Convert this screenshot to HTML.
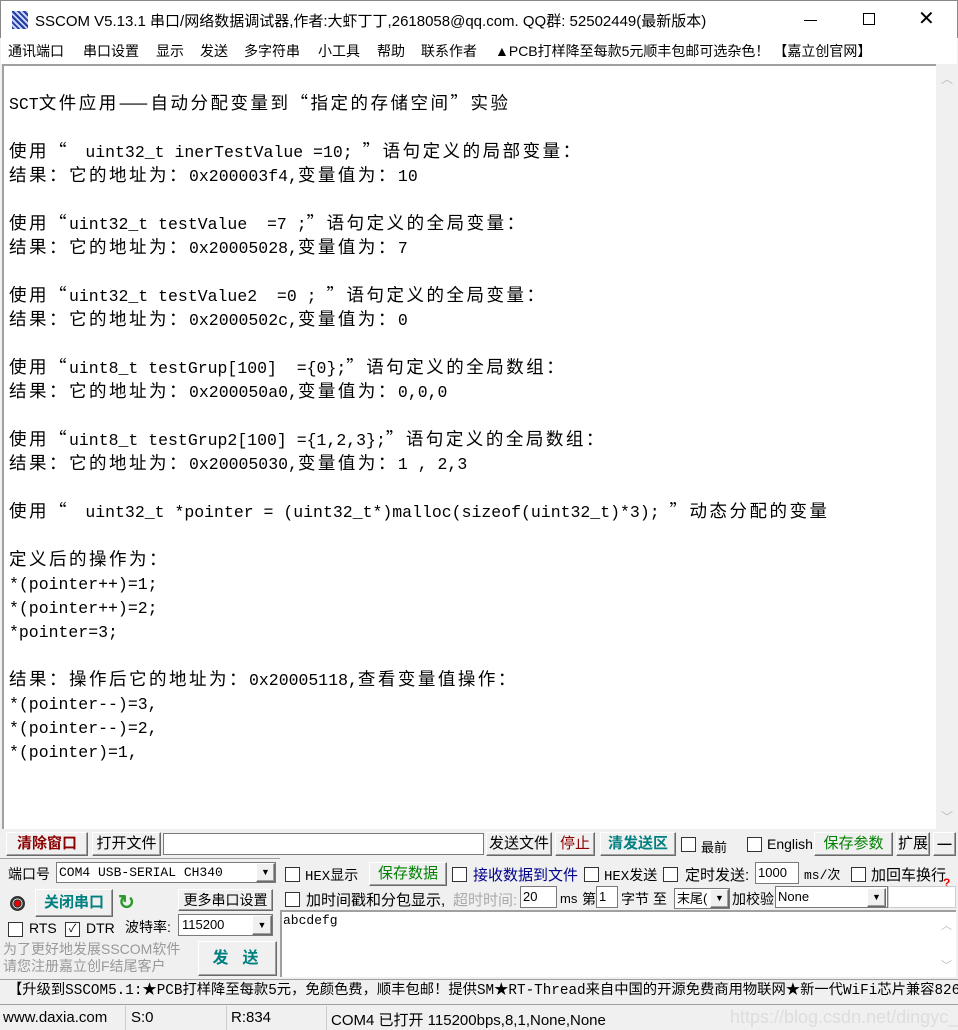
<!DOCTYPE html>
<html><head><meta charset="utf-8"><style>
*{margin:0;padding:0;box-sizing:border-box}
body{width:958px;height:1030px;position:relative;background:#f0f0f0;font-family:"Liberation Sans","Noto Sans CJK SC",sans-serif;font-size:14px;color:#000;overflow:hidden}
.a{position:absolute;white-space:nowrap}
#title{left:0;top:0;width:958px;height:38px;background:#fff;border:1px solid #888;border-bottom:none}
#menu{left:1px;top:38px;width:956px;height:26px;background:#fff;font-size:14px}
#txt{left:2px;top:64px;width:934px;height:765px;background:#fff;border-top:2px solid #a0a0a0;border-left:2px solid #a0a0a0;font-family:"Liberation Mono","Noto Sans CJK SC",monospace;font-size:16.5px;padding:3px 0 0 5px;color:#000}
#txt div{height:24px;line-height:24px;white-space:pre;overflow:visible}
.c{font-family:"Noto Sans CJK SC",sans-serif;font-size:17.5px;letter-spacing:2.5px;line-height:0}
#sb{left:936px;top:66px;width:20px;height:763px;background:#f0f0f0}
.btn{position:absolute;background:#f0f0f0;border:1px solid;border-color:#fff #696969 #696969 #fff;box-shadow:inset -1px -1px 0 #a0a0a0;text-align:center;white-space:nowrap}
.in{position:absolute;background:#fff;border:1px solid #7a7a7a;white-space:nowrap;overflow:hidden}
.cb{position:absolute;width:15px;height:15px;background:#fff;border:1px solid #333}
.mono{font-family:"Liberation Mono","Noto Sans CJK SC",monospace}
</style></head><body>
<div id="title" class="a">
 <div class="a" style="left:11px;top:10px;width:16px;height:18px;background:repeating-linear-gradient(45deg,#223c9c 0 2px,#c9d3ff 2px 4px)"></div>
 <div class="a" style="left:34px;top:9px;font-size:15px">SSCOM V5.13.1 串口/网络数据调试器,作者:大虾丁丁,2618058@qq.com. QQ群:  52502449(最新版本)</div>
 <div class="a" style="left:803px;top:19px;width:13px;height:1px;background:#000"></div>
 <div class="a" style="left:862px;top:12px;width:12px;height:12px;border:1px solid #000"></div>
 <div class="a" style="left:917px;top:5px;font-size:20px;font-weight:100">✕</div>
</div>
<div id="menu" class="a">
 <span class="a" style="left:7px;top:3px">通讯端口</span>
 <span class="a" style="left:82px;top:3px">串口设置</span>
 <span class="a" style="left:155px;top:3px">显示</span>
 <span class="a" style="left:199px;top:3px">发送</span>
 <span class="a" style="left:243px;top:3px">多字符串</span>
 <span class="a" style="left:317px;top:3px">小工具</span>
 <span class="a" style="left:376px;top:3px">帮助</span>
 <span class="a" style="left:420px;top:3px">联系作者</span>
 <span class="a" style="left:494px;top:3px">▲PCB打样降至每款5元顺丰包邮可选杂色！ 【嘉立创官网】</span>
</div>
<div id="txt" class="a"><div> </div>
<div>SCT<span class="c">文件应用——自动分配变量到“指定的存储空间”实验</span></div>
<div> </div>
<div><span class="c">使用“ </span> uint32_t inerTestValue =10; <span class="c">”语句定义的局部变量：</span></div>
<div><span class="c">结果：它的地址为：</span>0x200003f4,<span class="c">变量值为：</span>10</div>
<div> </div>
<div><span class="c">使用“</span>uint32_t testValue  =7 ;<span class="c">”语句定义的全局变量：</span></div>
<div><span class="c">结果：它的地址为：</span>0x20005028,<span class="c">变量值为：</span>7</div>
<div> </div>
<div><span class="c">使用“</span>uint32_t testValue2  =0 ; <span class="c">”语句定义的全局变量：</span></div>
<div><span class="c">结果：它的地址为：</span>0x2000502c,<span class="c">变量值为：</span>0</div>
<div> </div>
<div><span class="c">使用“</span>uint8_t testGrup[100]  ={0};<span class="c">”语句定义的全局数组：</span></div>
<div><span class="c">结果：它的地址为：</span>0x200050a0,<span class="c">变量值为：</span>0,0,0</div>
<div> </div>
<div><span class="c">使用“</span>uint8_t testGrup2[100] ={1,2,3};<span class="c">”语句定义的全局数组：</span></div>
<div><span class="c">结果：它的地址为：</span>0x20005030,<span class="c">变量值为：</span>1 , 2,3</div>
<div> </div>
<div><span class="c">使用“ </span> uint32_t *pointer = (uint32_t*)malloc(sizeof(uint32_t)*3); <span class="c">”动态分配的变量</span></div>
<div> </div>
<div><span class="c">定义后的操作为：</span></div>
<div>*(pointer++)=1;</div>
<div>*(pointer++)=2;</div>
<div>*pointer=3;</div>
<div> </div>
<div><span class="c">结果：操作后它的地址为：</span>0x20005118,<span class="c">查看变量值操作：</span></div>
<div>*(pointer--)=3,</div>
<div>*(pointer--)=2,</div>
<div>*(pointer)=1,</div>
</div>
<div id="sb" class="a"><span class="a" style="left:5px;top:4px;color:#bbb;font-size:12px">︿</span><span class="a" style="left:5px;top:742px;color:#bbb;font-size:12px">﹀</span></div>

<div class="btn" style="left:6px;top:832px;width:82px;height:24px;color:#8b0000;font-weight:bold;font-size:15px;line-height:22px">清除窗口</div>
<div class="btn" style="left:92px;top:832px;width:69px;height:24px;font-size:15px;line-height:22px">打开文件</div>
<div class="in" style="left:163px;top:833px;width:321px;height:22px"></div>
<div class="btn" style="left:486px;top:832px;width:66px;height:24px;font-size:15px;line-height:22px">发送文件</div>
<div class="btn" style="left:555px;top:832px;width:40px;height:24px;font-size:15px;line-height:22px;color:#8b0000">停止</div>
<div class="btn" style="left:600px;top:832px;width:76px;height:24px;font-size:15px;line-height:22px;color:#008080;font-weight:bold">清发送区</div>
<div class="cb" style="left:681px;top:837px"></div><span class="a" style="left:701px;top:837px;font-size:13px">最前</span>
<div class="cb" style="left:747px;top:837px"></div><span class="a" style="left:767px;top:836px;font-size:14px">English</span>
<div class="btn" style="left:814px;top:832px;width:79px;height:24px;font-size:15px;line-height:22px;color:#008000">保存参数</div>
<div class="btn" style="left:896px;top:832px;width:34px;height:24px;font-size:15px;line-height:22px">扩展</div>
<div class="btn" style="left:933px;top:832px;width:23px;height:24px;font-weight:bold;line-height:20px">—</div>

<div class="a" style="left:0;top:858px;width:280px;height:120px;border-top:1px solid #a0a0a0"></div>
<span class="a" style="left:8px;top:864px;font-size:14px">端口号</span>
<div class="in mono" style="left:56px;top:862px;width:220px;height:21px;font-size:13px;line-height:19px;padding-left:2px">COM4 USB-SERIAL CH340</div>
<div class="btn" style="left:256px;top:863px;width:19px;height:19px;font-size:9px;line-height:17px">▼</div>
<div class="a" style="left:10px;top:896px;width:15px;height:15px;border-radius:50%;background:radial-gradient(circle,#e00 0 3px,#333 3px 4px,#ddd 4px 5px,#333 5px)"></div>
<div class="btn" style="left:35px;top:889px;width:78px;height:28px;color:#008080;font-weight:bold;font-size:15px;line-height:26px">关闭串口</div>
<span class="a" style="left:118px;top:890px;color:#2a9a2a;font-size:20px;font-weight:bold">↻</span>
<div class="btn" style="left:178px;top:889px;width:95px;height:22px;font-size:14px;line-height:20px">更多串口设置</div>
<div class="cb" style="left:8px;top:922px"></div><span class="a" style="left:29px;top:920px;font-size:14px">RTS</span>
<div class="cb" style="left:65px;top:922px;font-size:11px;line-height:12px;text-align:center">✓</div><span class="a" style="left:86px;top:920px;font-size:14px">DTR</span>
<span class="a" style="left:125px;top:917px;font-size:14px">波特率:</span>
<div class="in" style="left:178px;top:914px;width:95px;height:22px;font-size:13px;line-height:20px;padding-left:3px">115200</div>
<div class="btn" style="left:252px;top:915px;width:20px;height:20px;font-size:9px;line-height:18px">▼</div>
<div class="a" style="left:3px;top:941px;color:#999;font-size:14px;line-height:17px">为了更好地发展SSCOM软件<br>请您注册嘉立创F结尾客户</div>
<div class="btn" style="left:198px;top:941px;width:79px;height:35px;color:#008080;font-weight:bold;font-size:16px;line-height:33px;letter-spacing:14px;padding-left:10px">发送</div>

<div class="cb" style="left:285px;top:867px"></div><span class="a mono" style="left:305px;top:865px;font-size:14px">HEX显示</span>
<div class="btn" style="left:369px;top:862px;width:78px;height:24px;color:#008000;font-size:15px;line-height:22px">保存数据</div>
<div class="cb" style="left:452px;top:867px"></div><span class="a" style="left:473px;top:864px;color:#00008b;font-size:15px">接收数据到文件</span>
<div class="cb" style="left:584px;top:867px"></div><span class="a mono" style="left:604px;top:865px;font-size:14px">HEX发送</span>
<div class="cb" style="left:663px;top:867px"></div><span class="a" style="left:685px;top:864px;font-size:15px">定时发送:</span>
<div class="in" style="left:755px;top:862px;width:44px;height:22px;font-size:13px;line-height:20px;padding-left:2px">1000</div>
<span class="a mono" style="left:804px;top:864px;font-size:13px">ms/次</span>
<div class="cb" style="left:851px;top:867px"></div><span class="a" style="left:871px;top:864px;font-size:15px">加回车换行</span>
<span class="a" style="left:943px;top:876px;color:#e00;font-weight:bold;font-size:12px">?</span>

<div class="cb" style="left:285px;top:892px"></div><span class="a" style="left:306px;top:889px;font-size:15px">加时间戳和分包显示,</span>
<span class="a" style="left:453px;top:889px;color:#aaa;font-size:15px">超时时间:</span>
<div class="in" style="left:520px;top:886px;width:37px;height:22px;font-size:13px;line-height:20px;padding-left:2px">20</div>
<span class="a" style="left:560px;top:891px;font-size:13px">ms</span>
<span class="a" style="left:582px;top:889px;font-size:14px">第</span>
<div class="in" style="left:596px;top:886px;width:22px;height:22px;font-size:13px;line-height:20px;padding-left:2px">1</div>
<span class="a" style="left:621px;top:889px;font-size:14px">字节 至</span>
<div class="in" style="left:674px;top:888px;width:56px;height:21px;font-size:13px;line-height:19px;padding-left:2px">末尾(</div>
<div class="btn" style="left:710px;top:889px;width:19px;height:19px;font-size:9px;line-height:17px">▼</div>
<span class="a" style="left:732px;top:889px;font-size:14px">加校验</span>
<div class="in" style="left:775px;top:886px;width:113px;height:22px;font-size:13px;line-height:20px;padding-left:2px">None</div>
<div class="btn" style="left:867px;top:888px;width:19px;height:19px;font-size:9px;line-height:17px">▼</div>
<div class="in" style="left:888px;top:886px;width:68px;height:22px;border-color:#ccc"></div>

<div class="in mono" style="left:280px;top:910px;width:676px;height:67px;border:none;border-top:2px solid #a0a0a0;border-left:2px solid #a0a0a0;font-size:13px;padding:1px 0 0 1px">abcdefg</div>
<span class="a" style="left:941px;top:917px;color:#bbb;font-size:11px">︿</span>
<span class="a" style="left:941px;top:957px;color:#bbb;font-size:11px">﹀</span>

<div class="a mono" style="left:0;top:979px;width:958px;height:22px;border-top:1px solid #a0a0a0;font-size:14.3px;line-height:22px;padding-left:8px;overflow:hidden">【升级到SSCOM5.1:★PCB打样降至每款5元，免颜色费，顺丰包邮！提供SM★RT-Thread来自中国的开源免费商用物联网★新一代WiFi芯片兼容826</div>
<div class="a" style="left:0;top:1004px;width:958px;height:26px;border-top:1px solid #a0a0a0;font-size:15px">
 <span class="a" style="left:3px;top:4px">www.daxia.com</span>
 <div class="a" style="left:125px;top:1px;width:1px;height:24px;background:#ccc"></div>
 <span class="a" style="left:131px;top:4px">S:0</span>
 <div class="a" style="left:226px;top:1px;width:1px;height:24px;background:#ccc"></div>
 <span class="a" style="left:231px;top:4px">R:834</span>
 <div class="a" style="left:326px;top:1px;width:1px;height:24px;background:#ccc"></div>
 <span class="a" style="left:331px;top:4px">COM4 已打开  115200bps,8,1,None,None</span>
 <span class="a" style="left:730px;top:2px;color:#ddd;font-size:18px">https://blog.csdn.net/dingyc_ee</span>
</div>
</body></html>
